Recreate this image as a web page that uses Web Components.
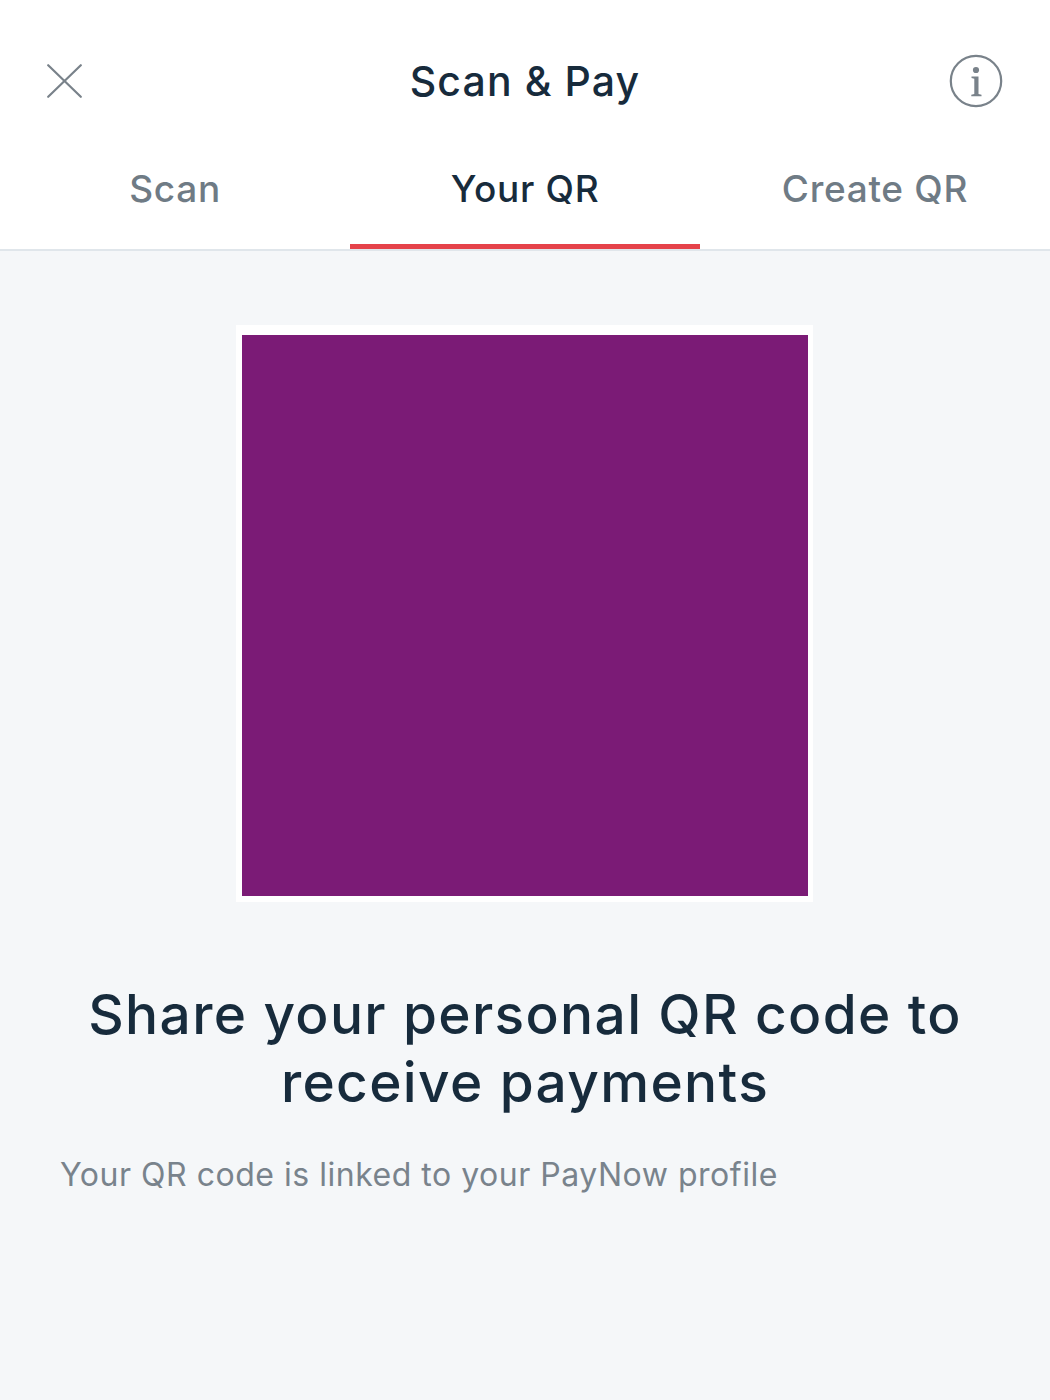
<!DOCTYPE html>
<html>
  <head>
    <meta charset="utf-8" />
    <title>Scan &amp; Pay</title>
    <style>
      html, body { margin: 0; height: 100%; }
      body {
        font-family: Inter, "Liberation Sans", sans-serif;
        background: #f5f7f9;
        color: #172b3c;
      }
    </style>
  </head>

  <body>
    <scan-page>
      <top-bar>Scan &amp; Pay</top-bar>
      <tab-bar>
        <tab-item>Scan</tab-item>
        <tab-item active>Your QR</tab-item>
        <tab-item>Create QR</tab-item>
      </tab-bar>
      <qr-panel></qr-panel>
      <share-text>
        <span slot="title">Share your personal QR code to receive payments</span>
        Your QR code is linked to your PayNow profile
      </share-text>
    </scan-page>

    <script type="module">
      class ScanPage extends HTMLElement {
        constructor() {
          super();
          this.attachShadow({ mode: "open" });
          this.shadowRoot.innerHTML = `
            <style>
              :host { display: flex; flex-direction: column; min-height: 1400px; }
            </style>
            <slot></slot>`;
        }
      }

      class TopBar extends HTMLElement {
        constructor() {
          super();
          this.attachShadow({ mode: "open" });
          this.shadowRoot.innerHTML = `
            <style>
              :host {
                display: flex;
                align-items: center;
                justify-content: space-between;
                height: 162px;
                padding: 0 47px;
                box-sizing: border-box;
                background: #fff;
              }
              h1 {
                margin: 0;
                font-size: 41px;
                font-weight: 500;
                line-height: 48px;
                letter-spacing: 1.1px;
                color: #172b3c;
              }
              svg { display: block; }
            </style>
            <svg width="54" height="34" viewBox="0 0 54 34" fill="none" stroke="#79828a" stroke-width="2.2" stroke-linecap="round">
              <path d="M1.2 1.2 33.8 32.8M33.8 1.2 1.2 32.8" />
            </svg>
            <h1><slot></slot></h1>
            <svg width="54" height="54" viewBox="0 0 54 54">
              <circle cx="27" cy="27" r="25.2" fill="none" stroke="#79828a" stroke-width="2.2" />
              <circle cx="27" cy="16" r="3.1" fill="#79828a" />
              <path fill="#79828a" d="M22.5 22.5h7v17.4l3 .8v1.5h-10.2v-1.5l3-.8V24.8l-2.8-.8z" />
            </svg>`;
        }
      }

      class TabBar extends HTMLElement {
        constructor() {
          super();
          this.attachShadow({ mode: "open" });
          this.shadowRoot.innerHTML = `
            <style>
              :host {
                display: grid;
                grid-template-columns: repeat(3, 1fr);
                height: 89px;
                box-sizing: border-box;
                background: #fff;
                border-bottom: 2px solid #e0e6eb;
              }
            </style>
            <slot></slot>`;
        }
      }

      class TabItem extends HTMLElement {
        constructor() {
          super();
          this.attachShadow({ mode: "open" });
          this.shadowRoot.innerHTML = `
            <style>
              :host {
                display: flex;
                justify-content: center;
                padding-top: 3px;
                height: 87px;
                box-sizing: border-box;
                font-size: 37px;
                font-weight: 500;
                line-height: 48px;
                letter-spacing: 0.7px;
                color: #6f7b85;
              }
              :host([active]) {
                color: #172b3c;
                border-bottom: 5px solid #e5424a;
              }
            </style>
            <slot></slot>`;
        }
      }

      class QrPanel extends HTMLElement {
        constructor() {
          super();
          this.attachShadow({ mode: "open" });
          this.shadowRoot.innerHTML = `
            <style>
              :host {
                display: flex;
                justify-content: center;
                padding-top: 74px;
                padding-right: 1px;
              }
              .frame {
                background: #fff;
                padding: 10px 5px 6px 6px;
              }
              .code {
                width: 566px;
                height: 561px;
                background: #7b1b76;
              }
            </style>
            <div class="frame"><div class="code"></div></div>`;
        }
      }

      class ShareText extends HTMLElement {
        constructor() {
          super();
          this.attachShadow({ mode: "open" });
          this.shadowRoot.innerHTML = `
            <style>
              :host {
                display: block;
                padding: 78px 60px 0;
              }
              h2 {
                margin: 0;
                font-size: 55px;
                font-weight: 500;
                line-height: 68px;
                letter-spacing: 1.35px;
                text-align: center;
                color: #172b3c;
              }
              p {
                margin: 37px 0 0;
                font-size: 32px;
                line-height: 44px;
                letter-spacing: 0.52px;
                color: #79838c;
              }
            </style>
            <h2><slot name="title"></slot></h2>
            <p><slot></slot></p>`;
        }
      }

      window.customElements.define("scan-page", ScanPage);
      window.customElements.define("top-bar", TopBar);
      window.customElements.define("tab-bar", TabBar);
      window.customElements.define("tab-item", TabItem);
      window.customElements.define("qr-panel", QrPanel);
      window.customElements.define("share-text", ShareText);
    </script>
  </body>
</html>
